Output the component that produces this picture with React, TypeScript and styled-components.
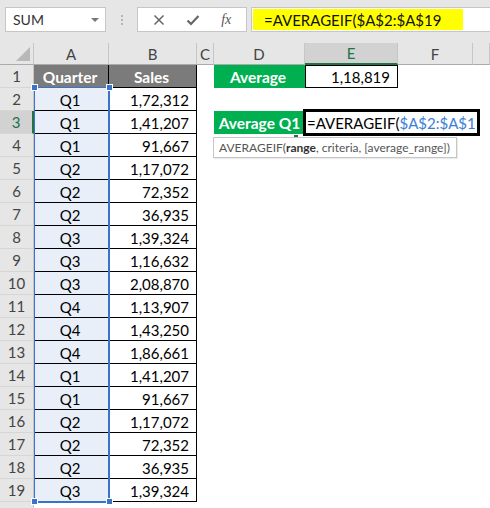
import React from 'react';
import styled, { createGlobalStyle, css } from 'styled-components';

const GlobalStyle = createGlobalStyle`
  html, body {
    margin: 0;
    padding: 0;
    background: #ffffff;
  }
  body {
    font-family: Lato, "Liberation Sans", sans-serif;
    width: 490px;
    height: 508px;
    overflow: hidden;
  }
`;

const Page = styled.div`
  width: 490px;
  height: 508px;
  overflow: hidden;
  background: #ffffff;
`;

const Toolbar = styled.div`
  height: 43px;
  background: #e6e6e6;
  display: flex;
  align-items: flex-start;
  padding: 7px 0 0 5px;
  box-sizing: border-box;
`;

const NameBox = styled.div`
  width: 101px;
  height: 25px;
  box-sizing: border-box;
  background: #fff;
  border: 1px solid #c6c6c6;
  display: flex;
  align-items: center;
  justify-content: space-between;
  padding: 0 6px 0 7px;
  font-size: 14px;
  color: #333;
`;

const Caret = styled.span`
  width: 0;
  height: 0;
  border-left: 4px solid transparent;
  border-right: 4px solid transparent;
  border-top: 4px solid #777;
`;

const Grip = styled.div`
  width: 31px;
  height: 25px;
  display: flex;
  flex-direction: column;
  align-items: center;
  justify-content: center;
  gap: 2px;

  span {
    width: 2px;
    height: 2px;
    background: #b4b4b4;
  }
`;

const ButtonBox = styled.div`
  width: 110px;
  height: 25px;
  box-sizing: border-box;
  background: #fff;
  border: 1px solid #c6c6c6;
  display: flex;
  align-items: center;
  justify-content: space-around;
  padding: 0 4px;
  color: #666;
`;

const Fx = styled.span`
  font-family: "Liberation Serif", serif;
  font-style: italic;
  font-size: 14px;
  color: #555;
`;

const FormulaInput = styled.div`
  flex: 1;
  margin-left: 4px;
  height: 25px;
  box-sizing: border-box;
  background: #fff;
  border: 1px solid #c6c6c6;
  border-right: none;
  padding: 1px 0 1px 1px;
  display: flex;
`;

const Highlight = styled.div`
  width: 210px;
  background: #ffff00;
  font-size: 15px;
  color: #111;
  padding-left: 11px;
  display: flex;
  align-items: center;
  box-sizing: border-box;
`;

const Sheet = styled.div`
  display: grid;
  grid-template-columns: 34px 75px 88px 17px 91px 93px 75px 17px;
  grid-template-rows: 22px repeat(19, 23px) 23px;
  font-size: 15px;
  color: #000;
`;

type At = { $row: number; $col: number };

const place = css<At>`
  grid-row: ${(p) => p.$row};
  grid-column: ${(p) => p.$col};
`;

const ColHead = styled.div<At & { $active?: boolean }>`
  ${place}
  background: #e6e6e6;
  color: #444;
  display: flex;
  align-items: center;
  justify-content: center;
  box-sizing: border-box;
  border-right: 1px solid #c6c6c6;
  border-bottom: 1px solid #ababab;
  ${(p) =>
    p.$active &&
    css`
      background: #d2d2d2;
      color: #217346;
      border-bottom: 2px solid #217346;
    `}
`;

const Corner = styled.div`
  grid-row: 1;
  grid-column: 1;
  background: #e6e6e6;
  box-sizing: border-box;
  border-right: 1px solid #c6c6c6;
  border-bottom: 1px solid #ababab;
  position: relative;

  &::after {
    content: '';
    position: absolute;
    right: 3px;
    bottom: 3px;
    width: 0;
    height: 0;
    border-left: 14px solid transparent;
    border-bottom: 14px solid #b8b8b8;
  }
`;

const RowHead = styled.div<At & { $active?: boolean }>`
  ${place}
  background: #e6e6e6;
  color: #444;
  display: flex;
  align-items: center;
  justify-content: center;
  box-sizing: border-box;
  border-right: 1px solid #c6c6c6;
  border-bottom: 1px solid #d6d6d6;
  ${(p) =>
    p.$active &&
    css`
      background: #d2d2d2;
      color: #217346;
      border-right: 2px solid #217346;
    `}
`;

const Cell = styled.div<
  At & {
    $align?: 'left' | 'center' | 'right';
    $fill?: string;
    $color?: string;
    $bold?: boolean;
    $border?: string;
    $pad?: string;
  }
>`
  ${place}
  display: flex;
  align-items: center;
  box-sizing: border-box;
  white-space: nowrap;
  padding: ${(p) => p.$pad || '0 8px 0 5px'};
  background: ${(p) => p.$fill || 'transparent'};
  color: ${(p) => p.$color || '#000'};
  font-weight: ${(p) => (p.$bold ? 700 : 400)};
  font-size: ${(p) => (p.$bold ? '15.5px' : '15px')};
  justify-content: ${(p) =>
    p.$align === 'center' ? 'center' : p.$align === 'right' ? 'flex-end' : 'flex-start'};
  box-shadow: ${(p) => p.$border || 'none'};
`;

const Selection = styled.div`
  grid-column: 2;
  grid-row: 3 / 21;
  position: relative;
  box-sizing: border-box;
  border-left: 1px solid #3a73c9;
  border-top: 1px solid #3a73c9;
  border-right: 2px solid #3a73c9;
  border-bottom: 2px solid #3a73c9;
  margin: -1px -1px -1px 0;
  pointer-events: none;
  z-index: 1;
`;

const Handle = styled.span<{ $pos: 'tl' | 'tr' | 'bl' | 'br' }>`
  position: absolute;
  width: 5px;
  height: 5px;
  background: #3a73c9;
  border: 1px solid #fff;
  ${(p) => (p.$pos[0] === 't' ? 'top: -4px;' : 'bottom: -4px;')}
  ${(p) => (p.$pos[1] === 'l' ? 'left: -4px;' : 'right: -5px;')}
`;

const Editor = styled.div`
  grid-column: 6 / 9;
  grid-row: 4;
  justify-self: start;
  width: 177px;
  height: 27px;
  margin: -2px 0 0 -2px;
  box-sizing: border-box;
  border: 3px solid #000;
  background: #fff;
  display: flex;
  align-items: center;
  padding-left: 1px;
  overflow: hidden;
  white-space: nowrap;
  z-index: 2;
`;

const Ref = styled.span`
  color: #3a7ed6;
`;

const Tip = styled.div`
  grid-column: 5 / 8;
  grid-row: 5;
  justify-self: start;
  align-self: start;
  margin: 3px 0 0 -1px;
  height: 21px;
  box-sizing: border-box;
  border: 1px solid #c6c6c6;
  background: #fff;
  box-shadow: 1px 1px 1px rgba(0, 0, 0, 0.08);
  padding: 0 6px 0 5px;
  display: flex;
  align-items: center;
  font-size: 12px;
  color: #555;
  white-space: nowrap;
  z-index: 2;

  b {
    color: #333;
  }
`;

const FillMark = styled.div`
  grid-column: 5;
  grid-row: 5;
  justify-self: end;
  align-self: start;
  width: 4px;
  height: 2px;
  margin: 1px 7px 0 0;
  background: #217346;
`;

const rows: [string, string][] = [
  ['Q1', '1,72,312'],
  ['Q1', '1,41,207'],
  ['Q1', '91,667'],
  ['Q2', '1,17,072'],
  ['Q2', '72,352'],
  ['Q2', '36,935'],
  ['Q3', '1,39,324'],
  ['Q3', '1,16,632'],
  ['Q3', '2,08,870'],
  ['Q4', '1,13,907'],
  ['Q4', '1,43,250'],
  ['Q4', '1,86,661'],
  ['Q1', '1,41,207'],
  ['Q1', '91,667'],
  ['Q2', '1,17,072'],
  ['Q2', '72,352'],
  ['Q2', '36,935'],
  ['Q3', '1,39,324'],
];

const GREEN = '#00b050';
const GREY = '#7b7b7b';
const LIGHT_BLUE = '#e9eff8';
const LINE_RB = 'inset -1px -1px 0 #000';
const LINE_LRB = 'inset -1px -1px 0 #000, inset 1px 0 0 #000';
const LINE_ALL = 'inset 0 0 0 1px #000';

const letters = ['A', 'B', 'C', 'D', 'E', 'F', ''];

const App: React.FC = () => {
  return (
    <Page>
      <GlobalStyle />
      <Toolbar>
        <NameBox>
          SUM
          <Caret />
        </NameBox>
        <Grip>
          <span />
          <span />
          <span />
        </Grip>
        <ButtonBox>
          <svg width="12" height="12" viewBox="0 0 12 12">
            <path d="M1.5 1.5 L10.5 10.5 M10.5 1.5 L1.5 10.5" stroke="#666" strokeWidth="1.5" />
          </svg>
          <svg width="14" height="12" viewBox="0 0 14 12">
            <path d="M1.5 6.5 L5 10 L12.5 2" stroke="#666" strokeWidth="2.2" fill="none" />
          </svg>
          <Fx>fx</Fx>
        </ButtonBox>
        <FormulaInput>
          <Highlight>=AVERAGEIF($A$2:$A$19</Highlight>
        </FormulaInput>
      </Toolbar>

      <Sheet>
        <Corner />
        {letters.map((l, i) => (
          <ColHead key={i} $row={1} $col={i + 2} $active={l === 'E'}>
            {l}
          </ColHead>
        ))}

        <RowHead $row={2} $col={1}>1</RowHead>
        <Cell $row={2} $col={2} $align="center" $fill={GREY} $color="#fff" $bold $border={LINE_RB}>
          Quarter
        </Cell>
        <Cell $row={2} $col={3} $align="center" $fill={GREY} $color="#fff" $bold $border={LINE_RB}>
          Sales
        </Cell>
        <Cell $row={2} $col={5} $align="center" $fill={GREEN} $color="#fff" $bold>
          Average
        </Cell>
        <Cell $row={2} $col={6} $align="right" $border={LINE_ALL}>
          1,18,819
        </Cell>

        {rows.map(([q, s], i) => {
          const r = i + 2;
          return (
            <React.Fragment key={r}>
              <RowHead $row={r + 1} $col={1} $active={r === 3}>
                {r}
              </RowHead>
              <Cell $row={r + 1} $col={2} $align="center" $fill={LIGHT_BLUE} $border={LINE_RB}>
                {q}
              </Cell>
              <Cell $row={r + 1} $col={3} $align="right" $border={LINE_LRB}>
                {s}
              </Cell>
            </React.Fragment>
          );
        })}

        <Cell $row={4} $col={5} $align="center" $fill={GREEN} $color="#fff" $bold $pad="0">
          Average Q1
        </Cell>

        <RowHead $row={21} $col={1} />

        <Selection>
          <Handle $pos="tl" />
          <Handle $pos="tr" />
          <Handle $pos="bl" />
          <Handle $pos="br" />
        </Selection>

        <Editor>
          =AVERAGEIF(<Ref>$A$2:$A$1</Ref>
        </Editor>

        <FillMark />
        <Tip>
          AVERAGEIF(<b>range</b>, criteria, [average_range])
        </Tip>
      </Sheet>
    </Page>
  );
};

export default App;
